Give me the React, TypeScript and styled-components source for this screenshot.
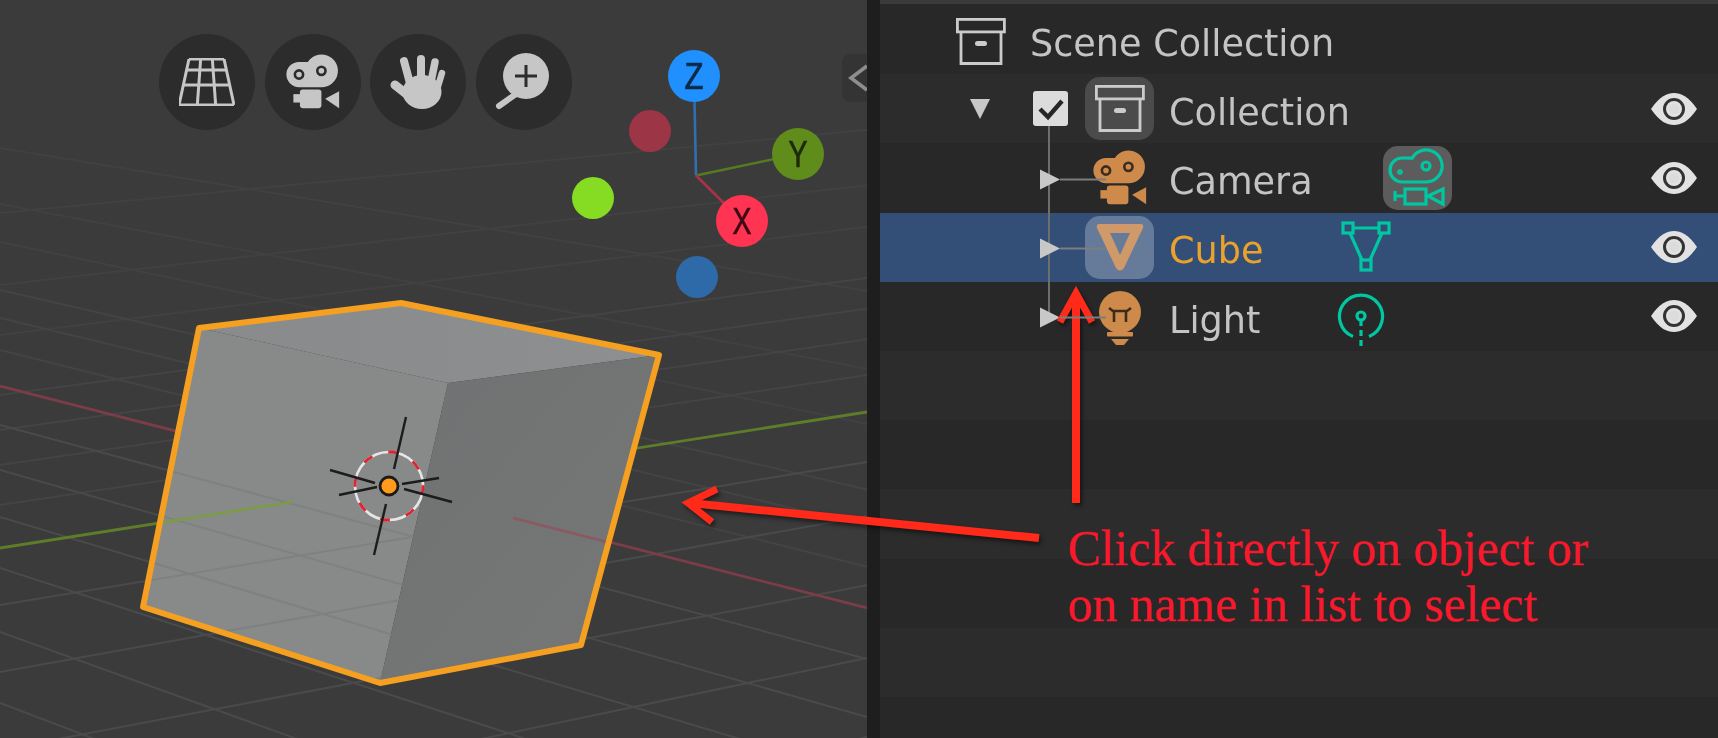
import React from "react";
import styled, { createGlobalStyle } from "styled-components";

const Global = createGlobalStyle`
  html, body { margin: 0; padding: 0; width: 1718px; height: 738px; overflow: hidden; background: #282828; }
  #root { width: 1718px; height: 738px; }
`;

const Page = styled.div`
  position: relative;
  display: flex;
  width: 1718px;
  height: 738px;
  overflow: hidden;
  font-family: "DejaVu Sans", "Liberation Sans", sans-serif;
`;
const Viewport = styled.section`
  position: relative;
  flex: 0 0 867px;
  height: 100%;
  background: #3b3b3b;
`;
const Scene3D = styled.svg`
  display: block;
  width: 867px;
  height: 738px;
  filter: blur(0.5px);
`;
const Divider = styled.div`
  flex: 0 0 13px;
  background: #1e1e1e;
`;
const NavBar = styled.div`
  position: absolute;
  left: 159px;
  top: 34px;
  display: flex;
  gap: 9.5px;
`;
const NavButton = styled.div`
  width: 96px;
  height: 96px;
  border-radius: 50%;
  background: #2c2c2c;
  display: flex;
  align-items: center;
  justify-content: center;
  color: #c6c6c6;
`;
const CollapseTab = styled.div`
  position: absolute;
  right: 0;
  top: 54px;
  width: 25px;
  height: 48px;
  border-radius: 8px 0 0 8px;
  background: #343434;
`;
const Outliner = styled.section`
  position: relative;
  flex: 1;
  display: flex;
  flex-direction: column;
  background: #282828;
  padding-top: 5px;
  &::before {
    content: "";
    position: absolute;
    left: 0;
    right: 0;
    top: 0;
    height: 4px;
    background: #3a3a3a;
  }
`;
const TreeLine = styled.div`
  position: absolute;
  left: 168px;
  top: 126px;
  width: 2px;
  height: 192px;
  background: #6e6e6e;
`;
const Row = styled.div<{ $tone: "dark" | "light" | "active"; $indent: number }>`
  flex: 0 0 69.2px;
  display: flex;
  align-items: center;
  padding: 0 20px 0 ${(p) => p.$indent}px;
  background: ${(p) => (p.$tone === "active" ? "#334f77" : p.$tone === "light" ? "#2c2c2c" : "#282828")};
`;
const Label = styled.span<{ $active?: boolean; $gap?: number }>`
  font-size: 36.6px;
  line-height: 1;
  white-space: nowrap;
  color: ${(p) => (p.$active ? "#eaa22c" : "#c4c4c4")};
  margin-left: ${(p) => p.$gap ?? 15}px;
  margin-top: 9px;
  filter: blur(0.5px);
`;
const Disclosure = styled.span<{ $dir: "down" | "right" }>`
  width: 0;
  height: 0;
  flex: none;
  ${(p) =>
    p.$dir === "down"
      ? `border-left: 10px solid transparent; border-right: 10px solid transparent; border-top: 20px solid #c8c8c8;`
      : `border-top: 10px solid transparent; border-bottom: 10px solid transparent; border-left: 20px solid #c8c8c8; transform: translateY(1.5px);`}
`;
const Connector = styled.span`
  flex: none;
  width: 46px;
  height: 2px;
  margin-right: -21px;
  background: #7d7d7d;
  position: relative;
  z-index: 1;
  transform: translateY(1.5px);
`;
const CheckBox = styled.span`
  flex: none;
  width: 35px;
  height: 35px;
  margin-left: 43px;
  margin-right: 17px;
  border-radius: 3px;
  background: #dcdcdc;
  display: flex;
  align-items: center;
  justify-content: center;
`;
const IconSlot = styled.span<{ $hl?: "none" | "gray" | "glass" | "data"; $drop?: number }>`
  flex: none;
  width: 69px;
  height: ${(p) => (p.$hl === "data" ? 64 : 63)}px;
  border-radius: 15px;
  display: flex;
  align-items: center;
  justify-content: center;
  margin-top: ${(p) => p.$drop ?? 0}px;
  background: ${(p) =>
    p.$hl === "gray"
      ? "#4b4b4b"
      : p.$hl === "glass"
      ? "rgba(255,255,255,0.25)"
      : p.$hl === "data"
      ? "#5c5c5c"
      : "transparent"};
`;
const DataSlot = styled(IconSlot)<{ $before: number }>`
  margin-left: ${(p) => p.$before}px;
`;
const EyeSlot = styled.span`
  margin-left: auto;
  display: flex;
`;
const SceneIcon = styled.span`
  display: flex;
  margin-top: 3px;
`;
const Note = styled.p`
  position: absolute;
  left: 1068px;
  top: 521px;
  margin: 0;
  font-family: "Liberation Serif", "DejaVu Serif", serif;
  font-size: 49.6px;
  line-height: 56px;
  color: #f9192d;
  white-space: nowrap;
  -webkit-text-stroke: 0.4px #f9192d;
`;
const ArrowLayer = styled.svg`
  position: absolute;
  left: 0;
  top: 0;
  width: 1718px;
  height: 738px;
  pointer-events: none;
  filter: drop-shadow(2px 3px 2px rgba(0, 0, 0, 0.5));
`;
const Svg = styled.svg`
  display: block;
  flex: none;
`;

/* ---- icons ---- */
const GridIcon = () => {
  const rows = [0, 11, 26, 46];
  const xs = [0, 1 / 3, 2 / 3, 1];
  const left = (y: number) => 10 - (10 * y) / 46;
  const right = (y: number) => 45 + (10 * y) / 46;
  return (
    <Svg width="56" height="48" viewBox="0 -1 56 48" fill="none" stroke="currentColor" strokeWidth="3">
      {rows.map((y) => (
        <line key={y} x1={left(y)} y1={y} x2={right(y)} y2={y} />
      ))}
      {xs.map((t) => (
        <line key={t} x1={10 + 35 * t} y1={0} x2={55 * t} y2={46} />
      ))}
    </Svg>
  );
};

const CameraIcon = ({ color, hole, outline }: { color: string; hole?: string; outline?: boolean }) => {
  const lobes = "M15 34 H39 A16 16 0 1 0 25.2 10.2 C22 10 18 10 15 10 A12 12 0 0 0 15 34 Z";
  return outline ? (
    <Svg width="60" height="60" viewBox="0 0 60 60" fill="none" stroke={color} strokeWidth="3.2">
      <path d={lobes} />
      <circle cx="39" cy="18" r="4" />
      <circle cx="13" cy="24" r="1.2" />
      <rect x="18" y="41" width="21" height="15" />
      <path d="M8 43 V53 M8 48 H18 M41 48 L56 41 V56 Z" />
    </Svg>
  ) : (
    <Svg width="56" height="58" viewBox="0 0 60 60" fill={color}>
      <path d={lobes} stroke={color} strokeWidth="3" />
      <circle cx="15" cy="22" r="4.4" fill="none" stroke={hole} strokeWidth="2.8" />
      <circle cx="39" cy="18" r="4.4" fill="none" stroke={hole} strokeWidth="2.8" />
      <rect x="16" y="38" width="23" height="20" rx="3" />
      <rect x="9" y="43" width="8" height="9" />
      <path d="M43 48 L58 40 V58 Z" />
    </Svg>
  );
};

const HandIcon = () => (
  <Svg width="56" height="58" viewBox="0 0 56 58" fill="none" stroke="currentColor" strokeLinecap="round">
    <ellipse cx="32" cy="39" rx="19.5" ry="17" fill="currentColor" stroke="none" />
    <path d="M14 8 L21 34" strokeWidth="8" />
    <path d="M31 6 L31 34" strokeWidth="8" />
    <path d="M45 9 L40 34" strokeWidth="7.5" />
    <path d="M52 20 L46 40" strokeWidth="6.5" />
    <path d="M5 32 L24 47" strokeWidth="9" />
  </Svg>
);

const ZoomIcon = () => (
  <Svg width="58" height="58" viewBox="0 0 58 58" fill="none">
    <circle cx="31" cy="23" r="23" fill="currentColor" />
    <path d="M20 23 H42 M31 12 V34" stroke="#2c2c2c" strokeWidth="3" />
    <path d="M21 41 L4 53" stroke="currentColor" strokeWidth="6" strokeLinecap="round" />
  </Svg>
);

const ArchiveIcon = () => (
  <Svg width="50" height="47" viewBox="0 0 50 47" fill="none" stroke="#cbcbcb" strokeWidth="2.8">
    <rect x="1.4" y="1.4" width="47" height="12.5" />
    <path d="M5 14 V45.5 H45 V14" />
    <rect x="19" y="23" width="12" height="5" rx="2.5" fill="#cbcbcb" stroke="none" />
  </Svg>
);

const ConeIcon = () => (
  <Svg width="52" height="52" viewBox="0 0 52 52">
    <path
      fillRule="evenodd"
      d="M5 3 H47 Q50 3 49 7 L30 47 Q26 52 22 47 L3 7 Q2 3 5 3 Z M16 12 L26 34 L36 12 Z"
      fill="#d0996a"
    />
  </Svg>
);

const MeshIcon = () => (
  <Svg width="50" height="52" viewBox="0 0 50 52" fill="none" stroke="#00c7a2" strokeWidth="3.2">
    <rect x="2" y="2" width="10" height="10" />
    <rect x="38" y="2" width="10" height="10" />
    <rect x="20" y="39" width="10" height="10" />
    <path d="M12 7 H38 M9 12 L21 39 M41 12 L29 39" />
  </Svg>
);

const BulbIcon = () => (
  <Svg width="46" height="56" viewBox="0 0 46 56">
    <circle cx="23" cy="21" r="21" fill="#cd8a4b" />
    <rect x="11" y="33" width="24" height="5" fill="#cd8a4b" />
    <rect x="10" y="41" width="26" height="4.5" rx="1" fill="#cd8a4b" />
    <path d="M14 48 H32 L27 54 H19 Z" fill="#cd8a4b" />
    <path d="M12 17 L16 20 H30 L34 17 M17 20 V31 M29 20 V31" fill="none" stroke="#3b2c20" strokeWidth="2.6" />
  </Svg>
);

const LightDataIcon = () => (
  <Svg width="48" height="56" viewBox="0 0 48 56" fill="none" stroke="#00c7a2" strokeWidth="3.2">
    <path d="M16 45.5 A21.5 21.5 0 1 1 32 45.5" />
    <circle cx="24" cy="25" r="4" />
    <path d="M24 29 V35 M24 39 V45 M24 49 V55" />
  </Svg>
);

const EyeIcon = () => (
  <Svg width="48" height="34" viewBox="0 0 48 34">
    <path d="M1 17 C10 4 17 1 24 1 C31 1 38 4 47 17 C38 30 31 33 24 33 C17 33 10 30 1 17 Z" fill="#e2e2e2" />
    <circle cx="24" cy="17" r="9.5" fill="none" stroke="#333333" strokeWidth="3" />
    <circle cx="24" cy="17" r="5.4" fill="#dcdcdc" />
  </Svg>
);

/* ---- viewport drawing ---- */
type GL = [number, number];
const majorLines: GL[] = [
  [703, 0.38], [632, 0.36], [568, 0.325], [517, 0.3], [470, 0.285], [425, 0.27],
  [945, -0.24], [840, -0.21], [750, -0.19], [672, -0.18], [605, -0.165],
];
const midLines: GL[] = [
  [350, 0.25], [318, 0.24], [290, 0.23], [505, -0.15], [465, -0.145], [430, -0.14], [395, -0.135],
];
const farLines: GL[] = [
  [242, 0.21], [204, 0.19], [148, 0.165], [335, -0.125], [285, -0.115], [213, -0.096],
];
const Lines = ({ set, color, width }: { set: GL[]; color: string; width: number }) => (
  <g stroke={color} strokeWidth={width}>
    {set.map(([y0, s]) => (
      <line key={`${y0}${s}`} x1={0} y1={y0} x2={867} y2={y0 + s * 867} />
    ))}
  </g>
);

const cubeFaces = {
  top: "199,328 401,303 659,355 448,383",
  left: "199,328 448,383 380,683 143,607",
  right: "448,383 659,355 581,645 380,683",
  outline: "199,328 401,303 659,355 581,645 380,683 143,607",
};
const axisDots = [
  { x: 650, y: 131, c: "#9c3546" },
  { x: 593, y: 198, c: "#86dc22" },
  { x: 697, y: 277, c: "#2f6aa8" },
];
const axes = [
  { x: 694, y: 76, c: "#2090ff", line: "#2f6fb3", t: "Z", tc: "#0b2947" },
  { x: 798, y: 154, c: "#608c1c", line: "#567a20", t: "Y", tc: "#1c2a08" },
  { x: 742, y: 221, c: "#ff3352", line: "#a63346", t: "X", tc: "#3d0a14" },
];
const crossLines = [
  [406, 417, 394, 469], [386, 504, 374, 555], [330, 470, 375, 483],
  [404, 489, 452, 502], [339, 495, 377, 487], [402, 484, 439, 478],
];

const ViewportDrawing = () => (
  <Scene3D viewBox="0 0 867 738">
    <defs>
      <linearGradient id="rightFace" x1="0" y1="0" x2="1" y2="1">
        <stop offset="0" stopColor="#707172" />
        <stop offset="1" stopColor="#767776" />
      </linearGradient>
      <linearGradient id="topFace" x1="0" y1="0" x2="1" y2="0">
        <stop offset="0" stopColor="#898a8b" />
        <stop offset="1" stopColor="#8e8f90" />
      </linearGradient>
      <clipPath id="cubeLeft">
        <polygon points={cubeFaces.left} />
      </clipPath>
    </defs>
    <Lines set={farLines} color="#414141" width={2} />
    <Lines set={midLines} color="#444444" width={2} />
    <Lines set={majorLines} color="#4a4a4a" width={2} />
    <line x1="0" y1="386" x2="867" y2="608" stroke="#7c3c48" strokeWidth="2.8" />
    <line x1="0" y1="548" x2="867" y2="412" stroke="#5d7d2a" strokeWidth="2.8" />

    <polygon points={cubeFaces.top} fill="url(#topFace)" />
    <polygon points={cubeFaces.left} fill="#888a8a" />
    <polygon points={cubeFaces.right} fill="url(#rightFace)" />
    <g clipPath="url(#cubeLeft)">
      <Lines set={majorLines} color="#7f8180" width={2} />
      <line x1="0" y1="548" x2="292" y2="502" stroke="#7c9a4a" strokeWidth="2.8" />
    </g>
    <line x1="513" y1="518" x2="611" y2="543" stroke="#8a5a62" strokeWidth="2.8" />
    <polygon points={cubeFaces.outline} fill="none" stroke="#f5a020" strokeWidth="6" strokeLinejoin="round" />

    <circle cx="389" cy="486" r="34" fill="none" stroke="#e6e6e6" strokeWidth="2.6" />
    <circle
      cx="389"
      cy="486"
      r="34"
      fill="none"
      stroke="#e0232f"
      strokeWidth="2.8"
      strokeDasharray="10 16.7"
      strokeDashoffset="1"
    />
    {crossLines.map(([x1, y1, x2, y2]) => (
      <line key={x1} x1={x1} y1={y1} x2={x2} y2={y2} stroke="#1c1c1c" strokeWidth="2.4" />
    ))}
    <circle cx="389" cy="486" r="9" fill="#ff9a1c" stroke="#1a1a1a" strokeWidth="2.8" />

    {axisDots.map((d) => (
      <circle key={d.c} cx={d.x} cy={d.y} r="21" fill={d.c} />
    ))}
    {axes.map((a) => (
      <g key={a.t}>
        <line x1="696" y1="175.5" x2={a.x} y2={a.y} stroke={a.line} strokeWidth="2.6" />
        <circle cx={a.x} cy={a.y} r="26" fill={a.c} />
        <text
          x={a.x}
          y={a.y + 13}
          textAnchor="middle"
          fontFamily="'Liberation Sans', sans-serif"
          fontSize="37"
          fill={a.tc}
          stroke={a.tc}
          strokeWidth="0.7"
          textLength="19"
          lengthAdjust="spacingAndGlyphs"
        >
          {a.t}
        </text>
      </g>
    ))}
  </Scene3D>
);

const Annotations = () => (
  <ArrowLayer viewBox="0 0 1718 738" fill="none" stroke="#ff2a1a" strokeWidth="8">
    <path d="M1039 538 L690 503" />
    <path d="M717 489 L688 503 L712 522" strokeWidth="7" />
    <path d="M1076 503 V296" />
    <path d="M1060 322 L1076 293 L1092 322" strokeWidth="7" />
  </ArrowLayer>
);

export default function App() {
  return (
    <>
      <Global />
      <Page>
        <Viewport>
          <ViewportDrawing />
          <NavBar>
            <NavButton><GridIcon /></NavButton>
            <NavButton><CameraIcon color="#c6c6c6" hole="#2c2c2c" /></NavButton>
            <NavButton><HandIcon /></NavButton>
            <NavButton><ZoomIcon /></NavButton>
          </NavBar>
          <CollapseTab>
            <Svg width="25" height="48" viewBox="0 0 25 48" fill="none" stroke="#8e8e8e" strokeWidth="3.6">
              <path d="M25 12 L9 24 L25 36" />
            </Svg>
          </CollapseTab>
        </Viewport>
        <Divider />
        <Outliner>
          <TreeLine />
          <Row $tone="dark" $indent={76}>
            <SceneIcon><ArchiveIcon /></SceneIcon>
            <Label $gap={24}>Scene Collection</Label>
          </Row>
          <Row $tone="light" $indent={90}>
            <Disclosure $dir="down" />
            <CheckBox>
              <Svg width="28" height="24" viewBox="0 0 28 24" fill="none" stroke="#262626" strokeWidth="4.4">
                <path d="M3 12 L11 20 L25 4" />
              </Svg>
            </CheckBox>
            <IconSlot $hl="gray"><ArchiveIcon /></IconSlot>
            <Label>Collection</Label>
            <EyeSlot><EyeIcon /></EyeSlot>
          </Row>
          <Row $tone="dark" $indent={160}>
            <Disclosure $dir="right" />
            <Connector />
            <IconSlot><CameraIcon color="#cd8a4b" hole="#3b2c20" /></IconSlot>
            <Label>Camera</Label>
            <DataSlot $hl="data" $before={70}><CameraIcon color="#00c7a2" outline /></DataSlot>
            <EyeSlot><EyeIcon /></EyeSlot>
          </Row>
          <Row $tone="active" $indent={160}>
            <Disclosure $dir="right" />
            <Connector />
            <IconSlot $hl="glass"><ConeIcon /></IconSlot>
            <Label $active>Cube</Label>
            <DataSlot $before={68}><MeshIcon /></DataSlot>
            <EyeSlot><EyeIcon /></EyeSlot>
          </Row>
          <Row $tone="dark" $indent={160}>
            <Disclosure $dir="right" />
            <Connector />
            <IconSlot $drop={6}><BulbIcon /></IconSlot>
            <Label>Light</Label>
            <DataSlot $drop={6} $before={66}><LightDataIcon /></DataSlot>
            <EyeSlot><EyeIcon /></EyeSlot>
          </Row>
          <Row $tone="light" $indent={0} />
          <Row $tone="dark" $indent={0} />
          <Row $tone="light" $indent={0} />
          <Row $tone="dark" $indent={0} />
          <Row $tone="light" $indent={0} />
          <Row $tone="dark" $indent={0} />
        </Outliner>
        <Annotations />
        <Note>
          Click directly on object or
          <br />
          on name in list to select
        </Note>
      </Page>
    </>
  );
}
